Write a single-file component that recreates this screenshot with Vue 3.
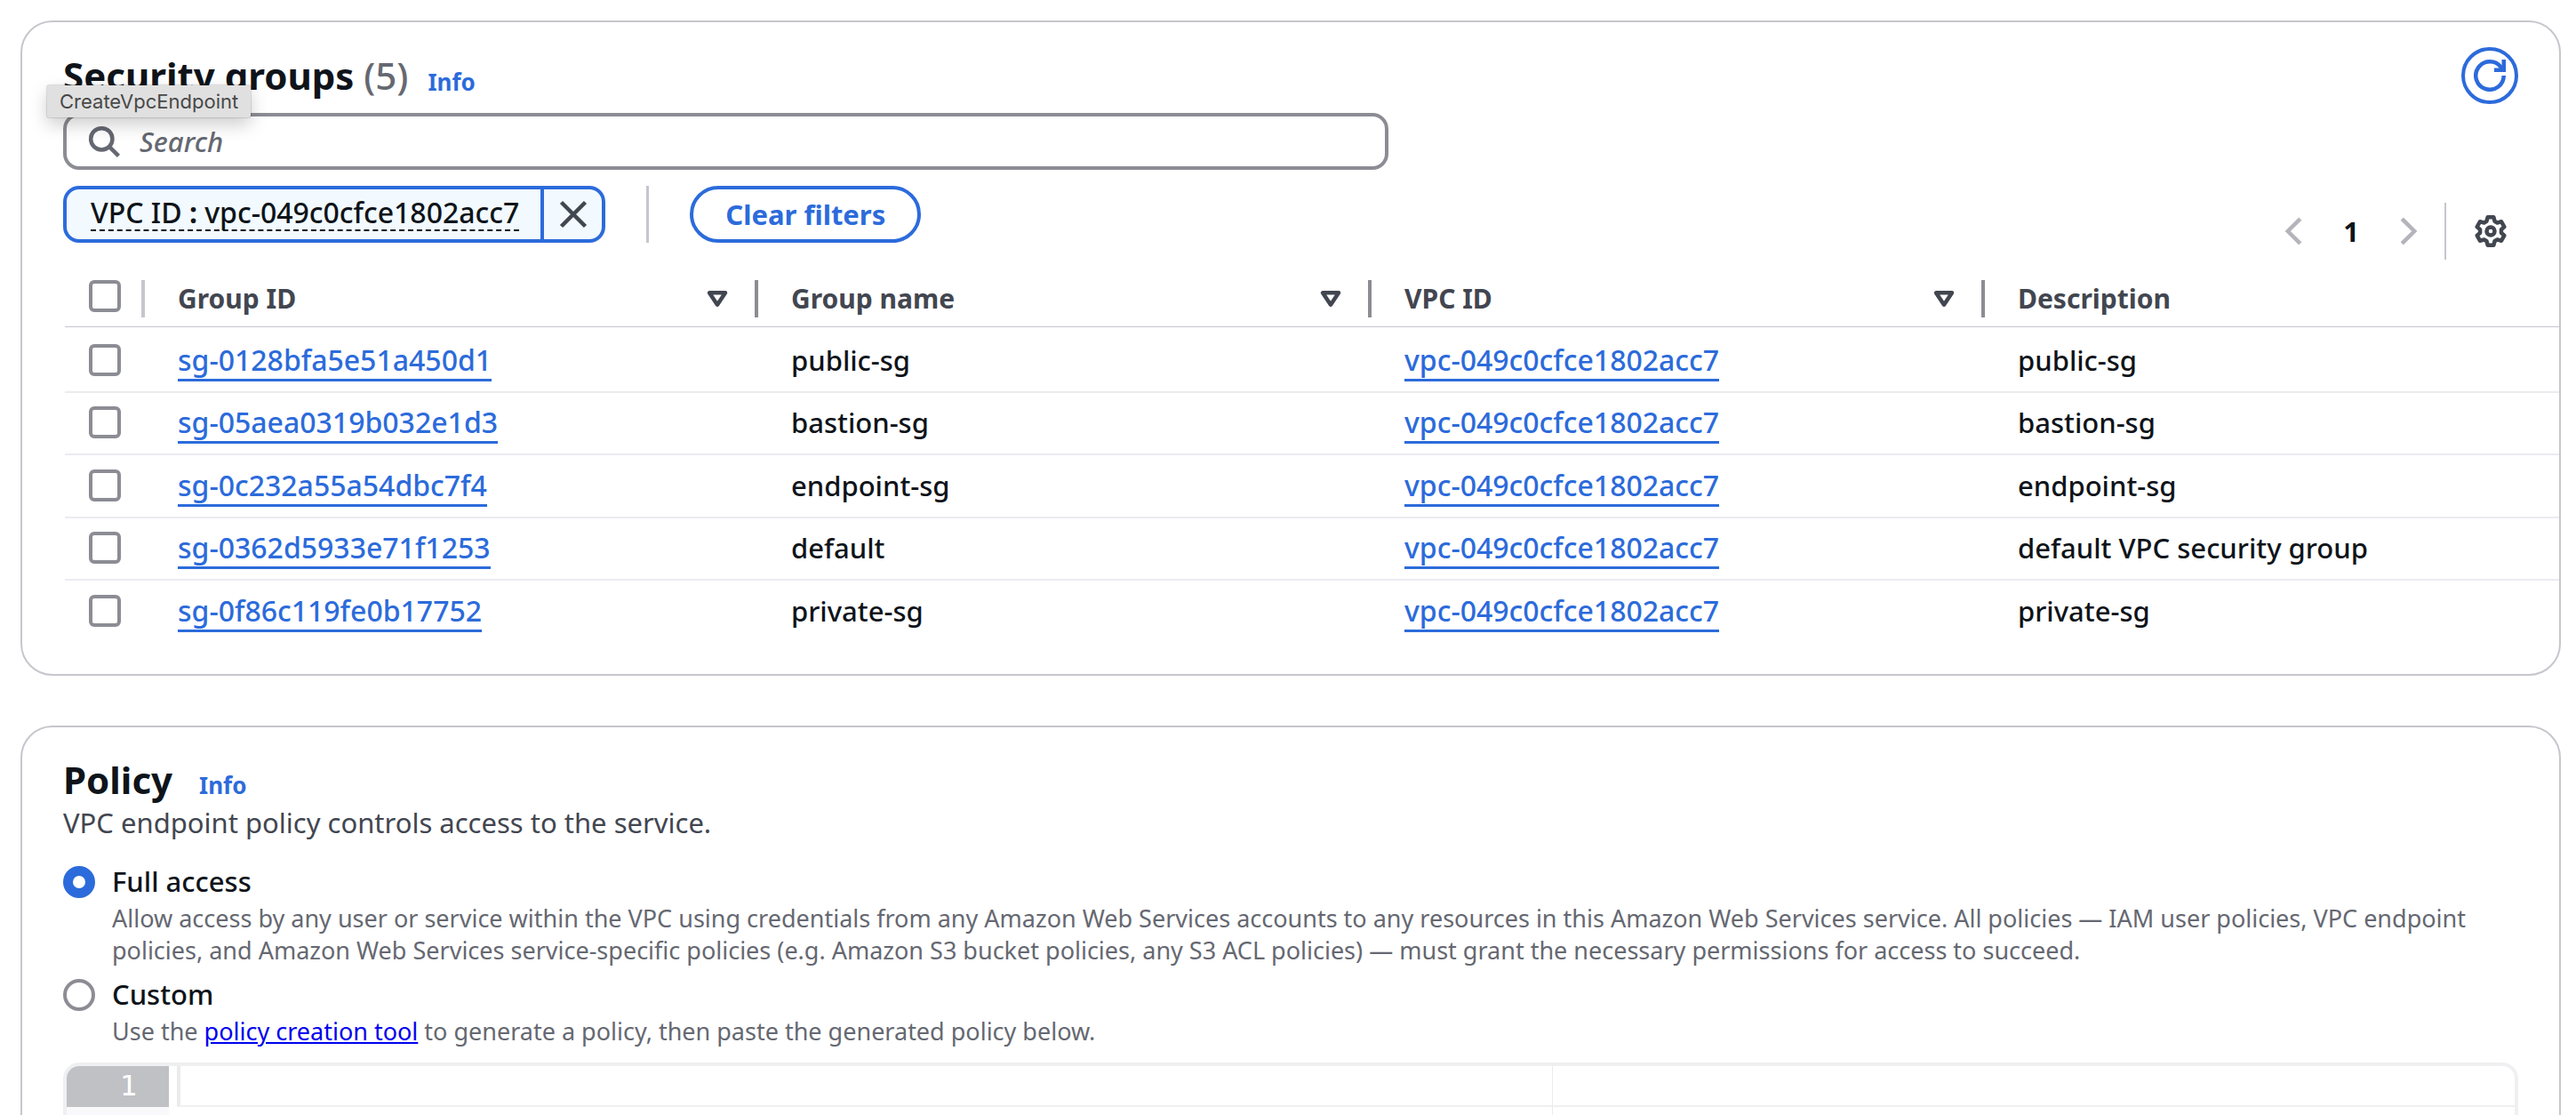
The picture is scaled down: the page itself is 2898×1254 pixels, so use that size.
<script setup>
import { ref } from 'vue'

const vpcId = 'vpc-049c0cfce1802acc7'
const columns = ['Group ID', 'Group name', 'VPC ID']
const groups = [
  { id: 'sg-0128bfa5e51a450d1', name: 'public-sg', description: 'public-sg' },
  { id: 'sg-05aea0319b032e1d3', name: 'bastion-sg', description: 'bastion-sg' },
  { id: 'sg-0c232a55a54dbc7f4', name: 'endpoint-sg', description: 'endpoint-sg' },
  { id: 'sg-0362d5933e71f1253', name: 'default', description: 'default VPC security group' },
  { id: 'sg-0f86c119fe0b17752', name: 'private-sg', description: 'private-sg' },
]
const selected = ref([])
const access = ref('full')
const query = ref('')
const policy = ref('')
</script>

<template>
  <main class="page">
    <section class="card groups">
      <header class="card-header">
        <h2>Security groups <span class="count">(5)</span></h2>
        <a href="#" class="info">Info</a>
        <button class="refresh" type="button" aria-label="Refresh">
          <svg viewBox="0 0 16 16" width="36" height="36" fill="none" stroke="currentColor" stroke-width="2">
            <path d="M15 8A7 7 0 1 1 13.6 3.8L14.6 5" />
            <path d="M15 0V5.2H10.2" />
          </svg>
        </button>
        <div class="tooltip" role="tooltip">CreateVpcEndpoint</div>
      </header>

      <div class="toolbar">
        <div class="filtering">
          <label class="search">
            <svg viewBox="0 0 16 16" width="36" height="36" fill="none" stroke="currentColor" stroke-width="2">
              <circle cx="6.8" cy="6.8" r="5.4" />
              <path d="M10.6 10.6L15.3 15.3" />
            </svg>
            <input v-model="query" type="search" placeholder="Search" aria-label="Search" />
          </label>
          <div class="filters">
            <div class="token">
              <button class="token-text" type="button"><span>VPC ID <b>:</b> {{ vpcId }}</span></button>
              <button class="token-close" type="button" aria-label="Remove filter">
                <svg viewBox="0 0 16 16" width="36" height="36" fill="none" stroke="currentColor" stroke-width="2">
                  <path d="M2 2L14 14M14 2L2 14" />
                </svg>
              </button>
            </div>
            <span class="filter-divider"></span>
            <button class="clear" type="button">Clear filters</button>
          </div>
        </div>
        <nav class="pagination" aria-label="Pagination">
          <button type="button" disabled aria-label="Previous page">
            <svg viewBox="0 0 16 16" width="36" height="36" fill="none" stroke="currentColor" stroke-width="2">
              <path d="M11 1.8L4.8 8L11 14.2" />
            </svg>
          </button>
          <button class="current" type="button">1</button>
          <button type="button" disabled aria-label="Next page">
            <svg viewBox="0 0 16 16" width="36" height="36" fill="none" stroke="currentColor" stroke-width="2">
              <path d="M5 1.8L11.2 8L5 14.2" />
            </svg>
          </button>
          <button class="settings" type="button" aria-label="Preferences">
            <svg viewBox="-8 -8 16 16" width="36" height="36" fill="none" stroke="currentColor" stroke-width="2" stroke-linejoin="round">
              <path d="M-1.5 -7H1.5L2 -5L3.3 -4.2L5.3 -4.8L6.8 -2.2L5.3 -.8V.8L6.8 2.2L5.3 4.8L3.3 4.2L2 5L1.5 7H-1.5L-2 5L-3.3 4.2L-5.3 4.8L-6.8 2.2L-5.3 .8V-.8L-6.8 -2.2L-5.3 -4.8L-3.3 -4.2L-2 -5Z" />
              <circle r="2" />
            </svg>
          </button>
        </nav>
      </div>

      <table>
        <colgroup>
          <col class="col-select" />
          <col v-for="name in columns" :key="name" class="col-data" />
          <col />
        </colgroup>
        <thead>
          <tr>
            <th class="select"><div class="th-select"><input type="checkbox" aria-label="Select all" /></div></th>
            <th v-for="name in columns" :key="name">
              <div class="th-inner">
                <span>{{ name }}</span>
                <button type="button" :aria-label="'Sort by ' + name">
                  <svg viewBox="0 0 16 16" width="36" height="36" fill="none" stroke="currentColor" stroke-width="2" stroke-linejoin="round">
                    <path d="M4 5H12L8 11Z" />
                  </svg>
                </button>
              </div>
            </th>
            <th><div class="th-inner last">Description</div></th>
          </tr>
        </thead>
        <tbody>
          <tr v-for="group in groups" :key="group.id">
            <td class="select"><input v-model="selected" type="checkbox" :value="group.id" :aria-label="'Select ' + group.id" /></td>
            <td><a href="#">{{ group.id }}</a></td>
            <td>{{ group.name }}</td>
            <td><a href="#">{{ vpcId }}</a></td>
            <td>{{ group.description }}</td>
          </tr>
        </tbody>
      </table>
    </section>

    <section class="card policy">
      <header class="policy-header">
        <h2>Policy</h2>
        <a href="#" class="info">Info</a>
      </header>
      <p class="lead">VPC endpoint policy controls access to the service.</p>

      <div class="option">
        <input id="full" v-model="access" type="radio" name="access" value="full" />
        <div>
          <label for="full">Full access</label>
          <p>Allow access by any user or service within the VPC using credentials from any Amazon Web Services accounts to any resources in this Amazon Web Services service. All policies — IAM user policies, VPC endpoint policies, and Amazon Web Services service-specific policies (e.g. Amazon S3 bucket policies, any S3 ACL policies) — must grant the necessary permissions for access to succeed.</p>
        </div>
      </div>
      <div class="option">
        <input id="custom" v-model="access" type="radio" name="access" value="custom" />
        <div>
          <label for="custom">Custom</label>
          <p>Use the <a href="#">policy creation tool</a> to generate a policy, then paste the generated policy below.</p>
        </div>
      </div>

      <div class="editor">
        <div class="gutter"><div class="line-number">1</div></div>
        <textarea v-model="policy" rows="1" aria-label="Policy document"></textarea>
        <span class="print-margin"></span>
      </div>
    </section>
  </main>
</template>

<style>
body {
  margin: 0;
  background: #fff;
}
</style>

<style scoped>
.page {
  --blue: #2c6bdb;
  --ink: #0f141a;
  --slate: #424650;
  --muted: #656871;
  --line: #c6c6cd;
  --control: #8c8c94;
  box-sizing: border-box;
  height: 100vh;
  overflow: hidden;
  padding: 23px 17px 0 23px;
  font: 500 31px/44px "Noto Sans", "Open Sans", sans-serif;
  color: var(--ink);
}

.page *,
.page *::before {
  box-sizing: border-box;
}

button,
input,
textarea {
  margin: 0;
  padding: 0;
  font: inherit;
  color: inherit;
  background: none;
  border: 0;
  outline: 0;
}

button,
svg {
  display: block;
  flex: none;
}

h2,
p {
  margin: 0;
}

.card {
  border: 2px solid var(--line);
  border-radius: 36px;
  background: #fff;
}

.groups {
  padding: 28px 0 34px;
}

.card-header,
.toolbar {
  padding: 0 46px;
}

.card-header {
  position: relative;
  display: flex;
  align-items: center;
  height: 64px;
  margin-bottom: 10px;
}

h2 {
  font-size: 42px;
  line-height: 52px;
  font-weight: 700;
}

.count {
  font-weight: 500;
  color: var(--muted);
}

.info {
  margin-left: 22px;
  font-size: 26px;
  line-height: 36px;
  font-weight: 700;
  color: var(--blue);
  text-decoration: none;
}

.card-header .info {
  padding-top: 14px;
}

.refresh {
  display: grid;
  place-items: center;
  width: 64px;
  height: 64px;
  margin-left: auto;
  border: 4px solid var(--blue);
  border-radius: 50%;
  color: var(--blue);
}

.tooltip {
  position: absolute;
  z-index: 1;
  top: 43px;
  left: 28px;
  padding: 0 14px;
  font: 22px/36px Inter, sans-serif;
  color: #484848;
  background: #e0e0e0;
  border-radius: 2px;
  box-shadow: 0 0 2px rgba(0, 0, 0, 0.4), 0 8px 20px rgba(0, 0, 0, 0.2);
}

.toolbar {
  display: flex;
  align-items: flex-end;
  justify-content: space-between;
}

.filtering {
  width: 54%;
  margin-bottom: 19px;
}

.search {
  display: flex;
  align-items: center;
  gap: 22px;
  height: 64px;
  padding: 0 24px;
  border: 4px solid var(--control);
  border-radius: 18px;
  color: var(--muted);
}

.search input {
  flex: 1;
  min-width: 0;
  appearance: none;
}

.search input::placeholder {
  color: var(--muted);
  font-style: italic;
  opacity: 1;
}

.filters {
  display: flex;
  margin-top: 18px;
}

.token {
  display: flex;
  height: 64px;
  border: 4px solid var(--blue);
  border-radius: 18px;
  background: #f2faff;
}

.token-text {
  padding: 0 24px 0 27px;
  font-size: 32px;
}

.token-text span {
  display: block;
  height: 38px;
  line-height: 34px;
  border-bottom: 2px dashed var(--ink);
}

.token-close {
  display: grid;
  place-items: center;
  width: 69px;
  border-left: 4px solid var(--blue);
  color: var(--slate);
}

.filter-divider {
  width: 3px;
  margin: 0 46px;
  background: var(--line);
}

.clear {
  height: 64px;
  padding: 0 36px;
  border: 4px solid var(--blue);
  border-radius: 32px;
  font-weight: 700;
  color: var(--blue);
}

.pagination {
  display: flex;
  align-items: center;
  height: 64px;
  color: var(--slate);
}

.pagination button:disabled {
  color: #b4b4bb;
}

.current {
  width: 92px;
  font-weight: 700;
  color: var(--ink);
}

.settings {
  height: 64px;
  margin-left: 23px;
  padding: 0 13px 0 32px;
  border-left: 2px solid var(--line);
}

table {
  width: calc(100% - 48px);
  margin-left: 48px;
  table-layout: fixed;
  border-collapse: separate;
  border-spacing: 0;
  text-align: left;
}

.col-select {
  width: 90px;
}

.col-data {
  width: 690px;
}

th {
  height: 76px;
  padding: 12px 0 0;
  border-bottom: 1px solid var(--line);
  font-size: 30px;
  color: var(--slate);
}

.th-inner,
.th-select {
  display: flex;
  align-items: center;
  height: 42px;
}

.th-inner {
  justify-content: space-between;
  padding: 0 24px 0 37px;
  border-right: 4px solid var(--control);
}

.th-inner.last {
  border: 0;
}

.th-select {
  align-items: flex-start;
  padding-left: 27px;
  border-right: 4px solid var(--line);
}

td {
  height: 70px;
  padding: 0 0 2px 37px;
  border-bottom: 2px solid #ebebf0;
}

td.select {
  padding-left: 27px;
}

tr:nth-child(odd) td {
  height: 71px;
}

tbody tr:first-child td {
  height: 74px;
  padding-top: 4px;
}

tbody tr:last-child td {
  border-color: transparent;
}

td a {
  font-size: 32px;
  color: var(--blue);
  text-decoration: none;
  border-bottom: 3px solid var(--blue);
}

input[type="checkbox"],
input[type="radio"] {
  display: block;
  flex: none;
  appearance: none;
  width: 36px;
  height: 36px;
  border: 4px solid var(--control);
  background: #fff;
}

input[type="checkbox"] {
  border-radius: 6px;
}

input[type="radio"] {
  border-radius: 50%;
}

input[type="radio"]:checked {
  border: 11px solid var(--blue);
}

.policy {
  margin-top: 56px;
  padding: 33px 46px 46px;
}

.policy-header {
  display: flex;
  align-items: baseline;
}

.policy-header .info {
  margin-left: 30px;
}

.lead {
  margin-bottom: 22px;
  font-weight: 400;
  color: var(--slate);
}

.option {
  display: flex;
  gap: 19px;
  margin-bottom: 9px;
}

.option input {
  margin-top: 5px;
}

.option label {
  display: block;
}

.option p {
  margin-top: 2px;
  font-size: 27px;
  font-weight: 400;
  line-height: 36px;
  color: var(--muted);
}

.option p a {
  color: #0000ee;
}

.editor {
  position: relative;
  display: flex;
  height: 640px;
  margin-top: 17px;
  border: 4px solid #f0f0f2;
  border-radius: 18px;
  overflow: hidden;
}

.gutter {
  width: 115px;
  margin-right: 9px;
  background: #f9f9fb;
}

.line-number {
  height: 46px;
  padding-right: 36px;
  text-align: right;
  font: 32px/44px "DejaVu Sans Mono", monospace;
  color: #fff;
  background: #c0c1c4;
}

textarea {
  flex: 1;
  height: 46px;
  resize: none;
  border-left: 4px solid #ebebeb;
  border-bottom: 2px solid #f0f0f0;
  font: 32px/44px "DejaVu Sans Mono", monospace;
}

.print-margin {
  position: absolute;
  top: 0;
  bottom: 0;
  left: 1671px;
  width: 1px;
  background: #ebebeb;
}
</style>
